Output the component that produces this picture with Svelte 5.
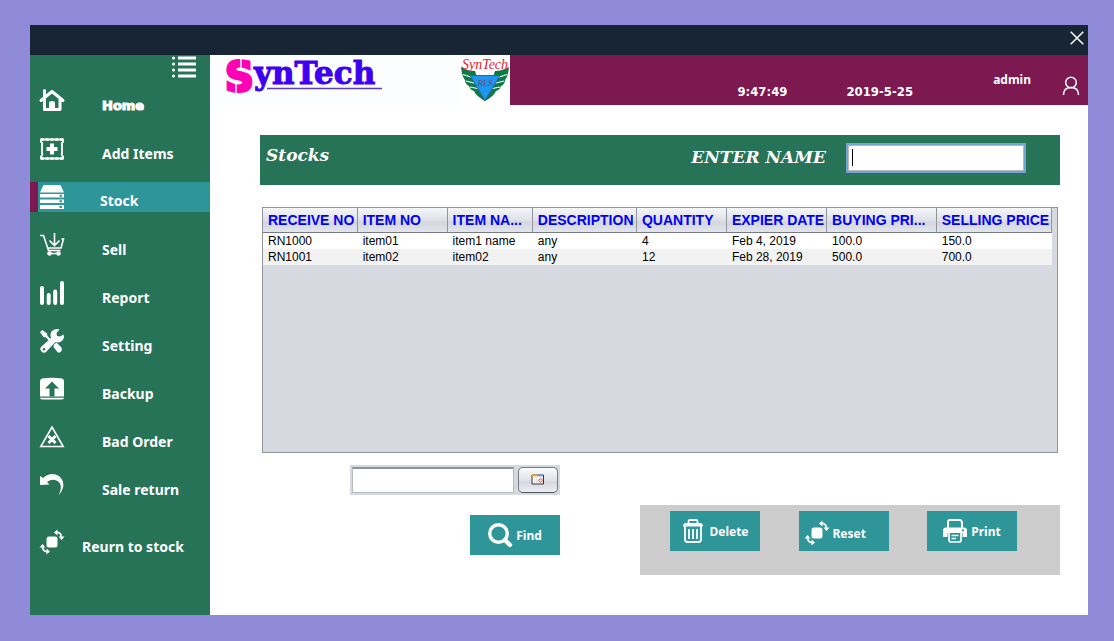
<script lang="ts">
	const menu = [
		{ label: 'Home', icon: 'home' },
		{ label: 'Add Items', icon: 'add' },
		{ label: 'Stock', icon: 'stock' },
		{ label: 'Sell', icon: 'sell' },
		{ label: 'Report', icon: 'report' },
		{ label: 'Setting', icon: 'setting' },
		{ label: 'Backup', icon: 'backup' },
		{ label: 'Bad Order', icon: 'bad' },
		{ label: 'Sale return', icon: 'undo' },
		{ label: 'Reurn to stock', icon: 'rotate' }
	];

	// widths are shares of the table, in percent
	const columns = [
		{ title: 'RECEIVE NO', width: 12 },
		{ title: 'ITEM NO', width: 11.4 },
		{ title: 'ITEM NA...', width: 10.8 },
		{ title: 'DESCRIPTION', width: 13.2 },
		{ title: 'QUANTITY', width: 11.4 },
		{ title: 'EXPIER DATE', width: 12.7 },
		{ title: 'BUYING PRI...', width: 13.9 },
		{ title: 'SELLING PRICE', width: 14.6 }
	];

	const rows = [
		['RN1000', 'item01', 'item1 name', 'any', '4', 'Feb 4, 2019', '100.0', '150.0'],
		['RN1001', 'item02', 'item02', 'any', '12', 'Feb 28, 2019', '500.0', '700.0']
	];

	let active = 'stock';
	let name = '';
	let date = '';
</script>

{#snippet icon(kind)}
	<svg class="icon" viewBox="0 0 24 24" aria-hidden="true">
		{#if kind === 'home'}
			<path d="M1 11.5 12 2.500 23 11.500M4.500 10V1.500M4.500 10V20.500H20V10" fill="none" stroke="#fff" stroke-width="3" stroke-linejoin="round" stroke-linecap="round" />
			<path d="M9 21V14Q9 12 12 12Q15 12 15 14V21Z" fill="#fff" />
		{:else if kind === 'add'}
			<path d="M1 2.500H23V5Q21 6 22 8V16Q21 18 23 19.500V21.500H1V19.500Q3 18 2 16V8Q3 6 1 5Z" fill="none" stroke="#fff" stroke-width="1.800" />
			<path d="M1 2.500H23M1 21.500H23" stroke="#fff" stroke-width="2.500" stroke-dasharray="3 1.750" />
			<path d="M12 6.500V17.500M6.500 12H17.500" stroke="#fff" stroke-width="4" />
		{:else if kind === 'stock'}
			<path d="M3.500 0H20.500L24 7.500H0Z" fill="#fff" />
			<path d="M0 9H24V12.500H0ZM0 14.500H24V18H0ZM0 20H24V24H0Z" fill="#fff" />
			<path d="M19.500 10.700H22M19.500 16.200H22M19.500 22H22" stroke="#2e9599" stroke-width="2" />
		{:else if kind === 'sell'}
			<path d="M0 2.500H3.500L8.500 17.500H20.500M7.500 15H21L23.500 6H21.500M14.500 0V12M9.500 7.500 14.500 12.500 19.500 7.500M9.500 20.500H18.500" fill="none" stroke="#fff" stroke-width="1.600" />
			<circle cx="9.500" cy="20.500" r="2.300" fill="#fff" />
			<circle cx="18.500" cy="20.500" r="2.300" fill="#fff" />
		{:else if kind === 'report'}
			<path d="M2 7V22M8.700 14V22M15.200 10.500V22M22 2V22" stroke="#fff" stroke-width="4" stroke-linecap="round" />
		{:else if kind === 'setting'}
			<path d="M0 3 2.500 1 7 4.500 7.500 7 13 12.500 11.500 14 6 8.500 3.500 8ZM14 15.500 16.500 13.500 21.500 18.500Q22.500 21.500 20.500 23Q18.500 24.500 17 22.500L13.500 18Z" fill="#fff" />
			<path d="M17.500 0 19.500.5 16.500 4 17 7 20 7.500 23.500 5.500Q25 10 21 12.500Q18.500 14 15.500 13L6.500 22.500Q4 25 1.500 22.500Q-1 20 1.500 17.500L11 9Q9.500 5 12 2Q14 0 17.500 0Z" fill="#fff" />
			<circle cx="4" cy="20.300" r="1.200" fill="#277357" />
		{:else if kind === 'backup'}
			<path d="M2 1.500Q12 0 22 1.500Q24 2 24 4V19.500H0V4Q0 2 2 1.500ZM0 20.800H24Q24 22.500 22 22.500H2Q0 22.500 0 20.800Z" fill="#fff" />
			<path d="M12 4.500 19 11.500H14.500V19.500H9.500V11.500H5Z" fill="#277357" />
		{:else if kind === 'bad'}
			<path d="M12 2 23.200 21.500H.8Z" fill="none" stroke="#fff" stroke-width="1.600" />
			<path d="M8.500 11 15.500 18M15.500 11 8.500 18" stroke="#fff" stroke-width="3" />
		{:else if kind === 'undo'}
			<path d="M0 3 3 5Q11-2 19 3Q28 11 18.500 22.500Q24 11 16.500 7.500Q12 5.500 7 9L9.500 11.500L0 12Z" fill="#fff" />
		{:else if kind === 'rotate'}
			<rect x="6.500" y="6.500" width="11" height="11" rx="2.500" fill="#fff" />
			<path d="M16 2.500Q21.500 2 21.500 8M8 21.500Q2.500 22 2.500 16" fill="none" stroke="#fff" stroke-width="1.800" />
			<path d="M14 2.500 17.500-.5V5.500ZM18.500 6.500H24.500L21.500 10ZM10 21.500 6.500 18.500V24.500ZM-.5 17.500H5.500L2.500 14Z" fill="#fff" />
		{:else if kind === 'find'}
			<circle cx="10.500" cy="10.500" r="8.800" fill="none" stroke="#fff" stroke-width="3.400" />
			<path d="M17 17 22 22" stroke="#fff" stroke-width="4.400" stroke-linecap="round" />
		{:else if kind === 'delete'}
			<path d="M7.500 4V2.500Q7.500 1 9 1H15Q16.500 1 16.500 2.500V4M4 7V20.500Q4 23 6.500 23H17.500Q20 23 20 20.500V7M8 10V20M12 10V20M16 10V20" fill="none" stroke="#fff" stroke-width="1.800" />
			<path d="M2 7.500Q2 4 5 4H19Q22 4 22 7.500Z" fill="#fff" />
		{:else if kind === 'print'}
			<path d="M5 10V3Q5 1 7 1H16Q19 1 19 4V10" fill="none" stroke="#fff" stroke-width="2" />
			<path d="M3 8.500H21Q24 8.500 24 11.500V18H19.500V14H4.500V18H0V11.500Q0 8.500 3 8.500Z" fill="#fff" />
			<path d="M6 14V21Q6 23 8 23H16Q18 23 18 21V14M8.500 16.500H15.500M8.500 19.500H13" fill="none" stroke="#fff" stroke-width="1.700" />
			<circle cx="20" cy="11.300" r="1.100" fill="#2e9599" />
		{/if}
	</svg>
{/snippet}

<div class="window">
	<div class="titlebar">
		<button class="close" aria-label="Close">
			<svg viewBox="0 0 14 14"><path d="M.7.7 13.300 13.300M13.300.7.7 13.300" stroke="#fff" stroke-width="1.500" /></svg>
		</button>
	</div>

	<div class="body">
		<nav>
			<button class="toggle" aria-label="Toggle menu">
				<svg viewBox="0 0 24 24">
					<path d="M6 3H24M6 9H24M6 15H24M6 21H24" stroke="#fff" stroke-width="3" />
					<path d="M1.500 3H1.510M1.500 9H1.510M1.500 15H1.510M1.500 21H1.510" stroke="#fff" stroke-width="3" stroke-linecap="round" />
				</svg>
			</button>
			{#each menu as item}
				<a href="#{item.icon}" class={item.icon} class:active={item.icon === active}>
					{@render icon(item.icon)}
					<span>{item.label}</span>
				</a>
			{/each}
		</nav>

		<div class="page">
			<header>
				<div class="brand">
					<svg class="wordmark" viewBox="0 0 250 50">
						<text x="15" y="36" class="big">S</text>
						<text x="44" y="29" class="rest">ynTech</text>
						<path d="M31 4V14M26 28V39" stroke="#fcfdff" stroke-width="1.500" />
						<path d="M57 33.500H172" stroke="#5a3fb0" stroke-width="1.500" />
					</svg>
					<svg class="badge" viewBox="0 0 50 50">
						<path d="M1 12Q8 16 15 16L17 22H33L35 16Q42 16 49 12Q48 22 45 25Q45 29 41 31Q40 35 36 36Q34 41 25 46Q16 41 14 36Q10 35 9 31Q5 29 5 25Q2 22 1 12Z" fill="#0b7a45" />
						<path d="M3 19.500 17 24M6 26 18 29M10 32 20 34M47 19.500 33 24M44 26 32 29M40 32 30 34" stroke="#fff" stroke-width="1.200" />
						<path d="M10 20.500H40L25 45.500Z" fill="#1e96f0" stroke="#2b62a8" />
						<text x="25" y="31" class="initials">RLS</text>
						<text x="25" y="14" class="script">SynTech</text>
					</svg>
				</div>
				<div class="status">
					<time class="clock">9:47:49</time>
					<time class="today">2019-5-25</time>
					<span class="user">admin</span>
					<svg class="avatar" viewBox="0 0 18 20">
						<circle cx="9" cy="6.500" r="5.300" fill="none" stroke="#fff" stroke-width="1.500" />
						<path d="M1.500 19Q1.500 11.500 9 11.500Q16.500 11.500 16.500 19" fill="none" stroke="#fff" stroke-width="1.500" />
					</svg>
				</div>
			</header>

			<main>
				<div class="heading">
					<h1>Stocks</h1>
					<label for="name">ENTER NAME</label>
					<div class="name-box">
						<input id="name" type="text" bind:value={name} />
						<span class="caret"></span>
					</div>
				</div>

				<div class="table-box">
					<table>
						<colgroup>
							{#each columns as column}
								<col style="width: {column.width}%" />
							{/each}
						</colgroup>
						<thead>
							<tr>
								{#each columns as column}
									<th>{column.title}</th>
								{/each}
							</tr>
						</thead>
						<tbody>
							{#each rows as row}
								<tr>
									{#each row as cell}
										<td>{cell}</td>
									{/each}
								</tr>
							{/each}
						</tbody>
					</table>
				</div>

				<div class="tools">
					<div class="search">
						<div class="date">
							<input type="text" aria-label="Date" bind:value={date} />
							<button aria-label="Pick a date">
								<svg viewBox="0 0 14 12">
									<path d="M1 1H12.500V10H1Z" fill="#fff" stroke="#333" />
									<path d="M1 1.500H6" stroke="#f0a830" stroke-width="2" />
									<path d="M6 1.500H12" stroke="#6fa0d8" stroke-width="2" />
									<path d="M3.500 4V9M5.500 4V9" stroke="#ddd" />
									<circle cx="9.500" cy="6.500" r="1.700" fill="none" stroke="#e04848" />
								</svg>
							</button>
						</div>
						<button class="action">{@render icon('find')}Find</button>
					</div>
					<div class="actions">
						<button class="action">{@render icon('delete')}Delete</button>
						<button class="action reset">{@render icon('rotate')}Reset</button>
						<button class="action">{@render icon('print')}Print</button>
					</div>
				</div>
			</main>
		</div>
	</div>
</div>

<style>
	:global(body) {
		background: #8f8bd8;
	}

	.window {
		box-sizing: border-box;
		min-height: 100vh;
		padding: 25px 26px 26px 30px;
		display: flex;
		flex-direction: column;
		font-family: 'Noto Sans', 'Open Sans', sans-serif;
		font-weight: bold;
		background: #8f8bd8;
	}

	button {
		padding: 0;
		border: 0;
		background: none;
		font: inherit;
		color: #fff;
		cursor: pointer;
	}

	svg {
		display: block;
		flex: none;
		overflow: visible;
	}

	.icon {
		width: 24px;
		height: 24px;
	}

	.titlebar {
		height: 30px;
		padding-right: 4px;
		display: flex;
		align-items: center;
		justify-content: flex-end;
		background: #182534;
	}

	.close svg {
		width: 14px;
		height: 14px;
		margin-bottom: 4px;
	}

	.body {
		flex: 1;
		display: flex;
		background: #fff;
	}

	nav {
		width: 180px;
		flex: none;
		display: flex;
		flex-direction: column;
		gap: 18px;
		background: #277357;
	}

	.toggle {
		align-self: flex-end;
		margin: 0 14px -11px 0;
	}

	.toggle svg {
		width: 24px;
		height: 24px;
	}

	nav a {
		height: 30px;
		padding-left: 10px;
		display: flex;
		align-items: center;
		gap: 38px;
		color: #fff;
		font-size: 14px;
		line-height: 20px;
		text-decoration: none;
	}

	nav a span {
		padding-top: 10px;
	}

	nav a.home {
		font-family: 'DejaVu Sans', sans-serif;
		font-size: 13px;
		-webkit-text-stroke: 1px #fff;
	}

	nav a.active {
		padding-left: 2px;
		border-left: 8px solid #7b1950;
		gap: 36px;
		background: #2e9599;
	}

	nav a.active span {
		padding-top: 8px;
	}

	nav a.rotate {
		margin-top: 9px;
		gap: 18px;
	}

	.page {
		flex: 1;
		min-width: 0;
	}

	header {
		height: 50px;
		display: flex;
		color: #fff;
		background: #7b1950;
	}

	.brand {
		display: flex;
		background: #fcfdff;
	}

	.wordmark {
		width: 250px;
		height: 50px;
	}

	.big {
		font: bold 40px 'DejaVu Sans', sans-serif;
		fill: #ff00b4;
		stroke: #ff00b4;
		stroke-width: 3px;
	}

	.rest {
		font: bold 31px 'DejaVu Serif', serif;
		fill: #4000f0;
		stroke: #4000f0;
		stroke-width: 1px;
	}

	.badge {
		width: 50px;
		height: 50px;
		background: #fff;
	}

	.script,
	.initials {
		font: italic 14px 'Liberation Serif', serif;
		text-anchor: middle;
		fill: #e8202c;
	}

	.initials {
		font-size: 9px;
		fill: #7a3c78;
	}

	.status {
		flex: 1;
		display: flex;
		justify-content: flex-end;
		padding-right: 8px;
		font-size: 13px;
		line-height: 18px;
	}

	.clock,
	.today {
		padding-top: 28px;
		font-family: 'DejaVu Sans Condensed', 'DejaVu Sans', sans-serif;
	}

	.clock {
		margin-right: 59px;
	}

	.today {
		margin-right: 80px;
	}

	.user {
		margin-right: 31px;
		padding-top: 16px;
		font-size: 12px;
	}

	.avatar {
		width: 18px;
		height: 20px;
		margin-top: 21px;
	}

	main {
		padding: 30px 28px 40px 50px;
	}

	.heading {
		height: 50px;
		padding: 0 34px 0 6px;
		display: flex;
		color: #fff;
		background: #277357;
	}

	h1,
	label {
		margin: 0;
		padding-top: 8px;
		font: italic bold 17px/24px 'DejaVu Serif', serif;
	}

	h1 {
		flex: 1;
	}

	label {
		padding-top: 10px;
	}

	input {
		box-sizing: border-box;
		padding: 0 4px;
		border: 1px solid #b8bac0;
		border-top: 2px solid #8f9196;
		background: #fff;
		font: 14px 'Liberation Sans', sans-serif;
		outline: none;
	}

	.name-box {
		position: relative;
		margin: 8px 0 0 20px;
	}

	.name-box input {
		width: 180px;
		height: 30px;
		border: 2px solid #73a4d1;
		box-shadow: inset 0 0 0 1px #b5bac2;
	}

	.caret {
		position: absolute;
		left: 6px;
		top: 6px;
		width: 1px;
		height: 17px;
		background: #000;
	}

	.table-box {
		height: 244px;
		margin: 22px 2px 0;
		padding-right: 5px;
		border: 1px solid #92959e;
		background: #d6d9e0;
	}

	table {
		width: 100%;
		table-layout: fixed;
		border-collapse: separate;
		border-spacing: 0;
		font: 12px/16px 'Liberation Sans', sans-serif;
		color: #000;
	}

	th,
	td {
		padding: 0 0 0 5px;
		overflow: hidden;
		text-align: left;
		white-space: nowrap;
	}

	th {
		height: 24px;
		border-right: 1px solid #92959e;
		border-bottom: 1px solid #777b84;
		background: linear-gradient(#f5f6f8, #dfe1e7 50%, #d3d6dd 60%, #e2e5ec);
		color: #0000f5;
		font-size: 14px;
	}

	tbody tr {
		background: #fff;
	}

	tbody tr:nth-child(even) {
		background: #f2f2f2;
	}

	.tools {
		display: flex;
		align-items: flex-start;
		gap: 80px;
		padding-top: 12px;
	}

	.search {
		width: 300px;
		display: flex;
		flex-direction: column;
		align-items: flex-end;
		gap: 20px;
	}

	.date {
		width: 210px;
		height: 30px;
		box-sizing: border-box;
		padding: 2px;
		display: flex;
		gap: 4px;
		background: #d6d9e0;
	}

	.date input {
		flex: 1;
		min-width: 0;
		height: 26px;
	}

	.date button {
		width: 40px;
		height: 26px;
		display: grid;
		place-items: center;
		border: 1px solid #777a82;
		border-bottom-color: #50535a;
		border-radius: 5px;
		background: linear-gradient(#fafbfc, #dfe2e8 50%, #d5d8e0 60%, #eceef4);
	}

	.date svg {
		width: 14px;
		height: 12px;
	}

	.action {
		width: 90px;
		height: 40px;
		display: flex;
		align-items: center;
		justify-content: center;
		gap: 4px;
		background: #2e9599;
		font-size: 12px;
	}

	.reset {
		box-sizing: border-box;
		padding: 4px 0 0 6px;
		justify-content: flex-start;
	}

	.actions {
		flex: 1;
		height: 64px;
		margin-top: 40px;
		padding: 6px 43px 0 30px;
		display: flex;
		justify-content: space-between;
		background: #ccc;
	}
</style>
